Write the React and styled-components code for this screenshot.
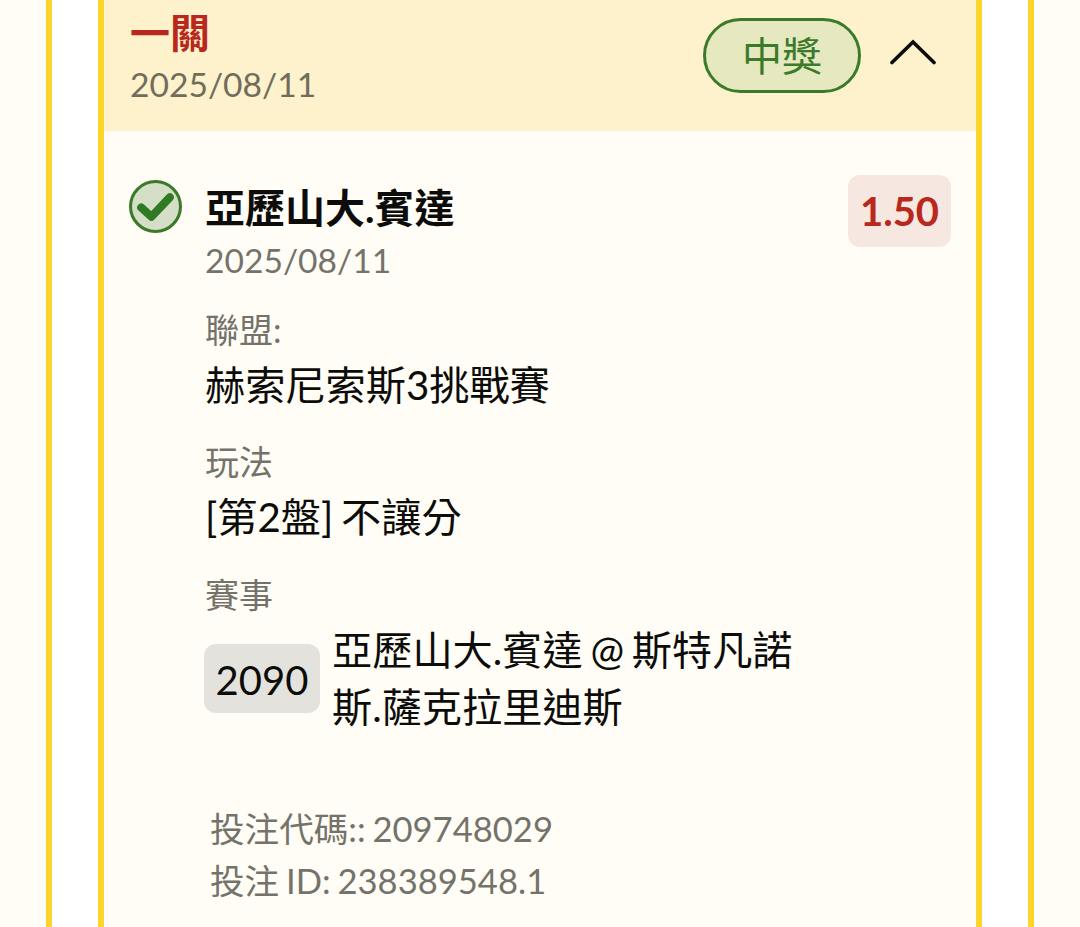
import React from 'react';
import styled, { createGlobalStyle } from 'styled-components';

const GlobalStyle = createGlobalStyle`
  html, body {
    margin: 0;
    padding: 0;
    background: #fffdf6;
    overflow: hidden;
  }
  body {
    font-family: Lato, "Noto Sans CJK TC", sans-serif;
  }
`;

const Page = styled.div`
  width: 1080px;
  height: 927px;
  overflow: hidden;
  padding: 0 46px;
  box-sizing: border-box;
`;

const OuterCard = styled.div`
  height: 100%;
  background: #ffffff;
  border-left: 6px solid #fdd42b;
  border-right: 6px solid #fdd42b;
  padding: 0 46px;
`;

const InnerCard = styled.div`
  height: 100%;
  background: #fffdf5;
  border-left: 6px solid #fdd42b;
  border-right: 6px solid #fdd42b;
`;

const Header = styled.div`
  height: 131px;
  box-sizing: border-box;
  background: #fdf2cb;
  display: flex;
  align-items: flex-start;
  justify-content: space-between;
  padding: 10px 40px 0 26px;
`;

const Title = styled.div`
  font-size: 40px;
  line-height: 46px;
  font-weight: 700;
  color: #b8281d;
`;

const HeaderDate = styled.div`
  font-size: 33.6px;
  line-height: 56px;
  color: #716c5c;
`;

const HeaderRight = styled.div`
  display: flex;
  align-items: center;
  gap: 29px;
  padding-top: 8px;
`;

const StatusPill = styled.div`
  width: 158px;
  height: 75px;
  box-sizing: border-box;
  padding-bottom: 4px;
  border: 3px solid #3b7a2a;
  border-radius: 38px;
  background: #e6e8c0;
  color: #3b7a2a;
  font-size: 40px;
  display: flex;
  align-items: center;
  justify-content: center;
`;

const Chevron = styled.svg`
  width: 46px;
  height: 28px;
  margin-bottom: 8px;
`;

const Body = styled.div`
  padding: 44px 25px 0 25px;
`;

const BetRow = styled.div`
  display: flex;
  align-items: flex-start;
`;

const CheckIcon = styled.svg`
  width: 53px;
  height: 53px;
  margin-top: 5px;
  flex: none;
`;

const BetMain = styled.div`
  flex: 1;
  margin-left: 23px;
`;

const TeamName = styled.div`
  font-size: 40px;
  line-height: 57px;
  font-weight: 700;
  color: #0c0c0a;
  margin-top: 5px;
`;

const BetDate = styled.div`
  font-size: 33.6px;
  line-height: 46px;
  color: #74736b;
`;

const OddsBadge = styled.div`
  width: 103px;
  height: 72px;
  border-radius: 12px;
  background: #f6e7e1;
  color: #b8281d;
  font-size: 40px;
  font-weight: 700;
  display: flex;
  align-items: center;
  justify-content: center;
  flex: none;
`;

const Details = styled.div`
  margin: -1px 0 0 76px;
`;

const Field = styled.div`
  margin-top: 22.6px;
`;

const FieldLabel = styled.div`
  font-size: 34px;
  line-height: 50px;
  color: #74736b;
`;

const FieldValue = styled.div`
  font-size: 40.2px;
  line-height: 60px;
  word-spacing: -2.5px;
  color: #0c0c0a;
`;

const MatchRow = styled.div`
  display: flex;
  align-items: center;
  gap: 12px;
  margin-top: 1px;
  margin-left: -1px;
`;

const MatchCode = styled.div`
  width: 116px;
  height: 69px;
  box-sizing: border-box;
  padding-top: 2px;
  margin-bottom: 1px;
  border-radius: 12px;
  background: #e3e2dd;
  font-size: 40px;
  color: #0c0c0a;
  display: flex;
  align-items: center;
  justify-content: center;
  flex: none;
`;

const MatchName = styled.div`
  width: 470px;
  margin-bottom: 3px;
  font-size: 40.2px;
  line-height: 57px;
  word-spacing: -2.5px;
  color: #0c0c0a;
`;

const Footer = styled.div`
  margin: 65px 0 0 81px;
`;

const FooterLine = styled.div`
  font-size: 34.6px;
  line-height: 52px;
  word-spacing: -2px;
  color: #74736b;
`;

export default function App() {
  return (
    <>
      <GlobalStyle />
      <Page>
        <OuterCard>
          <InnerCard>
            <Header>
              <div>
                <Title>一關</Title>
                <HeaderDate>2025/08/11</HeaderDate>
              </div>
              <HeaderRight>
                <StatusPill>中獎</StatusPill>
                <Chevron viewBox="0 0 46 28" fill="none">
                  <path d="M2 24.5 L23 4 L44 24.5" stroke="#0c0c0a" strokeWidth="3.6" strokeLinecap="round" />
                </Chevron>
              </HeaderRight>
            </Header>
            <Body>
              <BetRow>
                <CheckIcon viewBox="0 0 52 52" fill="none">
                  <circle cx="26" cy="26" r="24.5" fill="#d5dfc7" stroke="#3b7a2a" strokeWidth="3" />
                  <path d="M12 27 L22 36 L40 17" stroke="#2f7a22" strokeWidth="8" strokeLinecap="round" strokeLinejoin="round" />
                </CheckIcon>
                <BetMain>
                  <TeamName>亞歷山大.賓達</TeamName>
                  <BetDate>2025/08/11</BetDate>
                </BetMain>
                <OddsBadge>1.50</OddsBadge>
              </BetRow>
              <Details>
                <Field>
                  <FieldLabel>聯盟:</FieldLabel>
                  <FieldValue>赫索尼索斯3挑戰賽</FieldValue>
                </Field>
                <Field>
                  <FieldLabel>玩法</FieldLabel>
                  <FieldValue>[第2盤] 不讓分</FieldValue>
                </Field>
                <Field>
                  <FieldLabel>賽事</FieldLabel>
                  <MatchRow>
                    <MatchCode>2090</MatchCode>
                    <MatchName>亞歷山大.賓達 @ 斯特凡諾斯.薩克拉里迪斯</MatchName>
                  </MatchRow>
                </Field>
              </Details>
              <Footer>
                <FooterLine>投注代碼:: 209748029</FooterLine>
                <FooterLine>投注 ID: 238389548.1</FooterLine>
              </Footer>
            </Body>
          </InnerCard>
        </OuterCard>
      </Page>
    </>
  );
}
